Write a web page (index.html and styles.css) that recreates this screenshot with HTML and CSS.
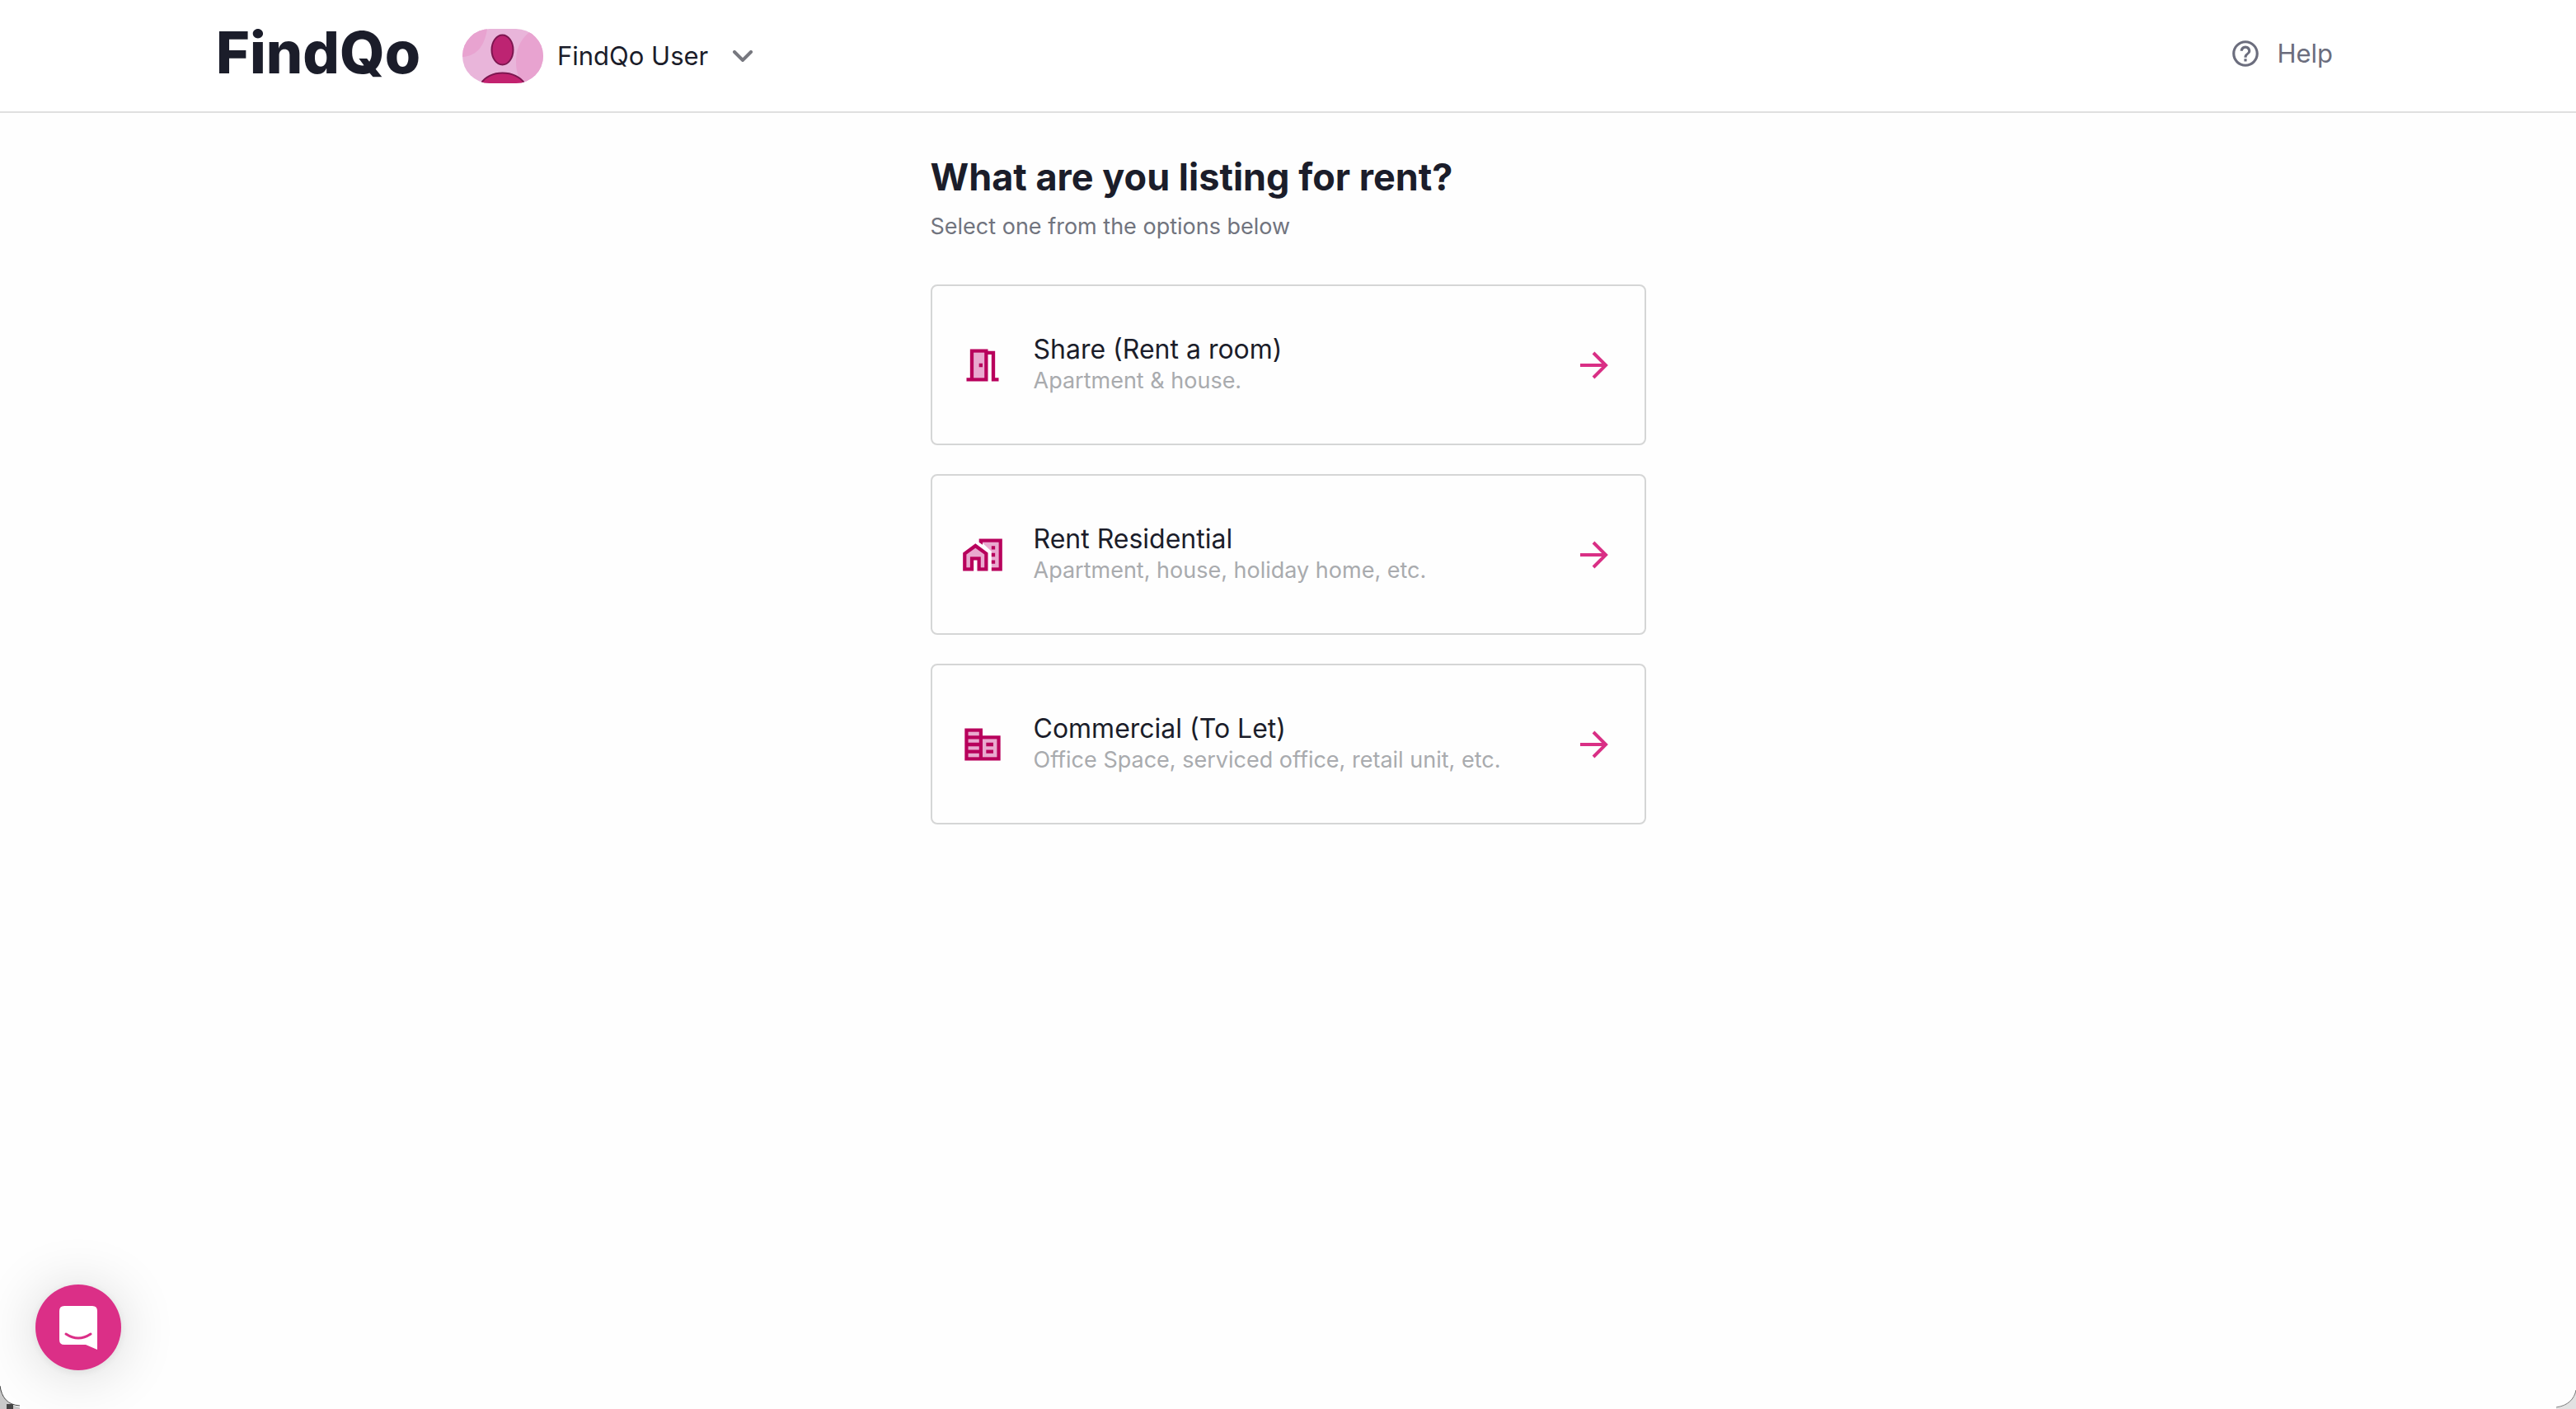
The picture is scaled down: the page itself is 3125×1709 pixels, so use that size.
FILE: index.html
```html
<!DOCTYPE html>
<html lang="en">
<head>
<meta charset="utf-8">
<meta name="viewport" content="width=device-width, initial-scale=1">
<title>FindQo – List for rent</title>
<link rel="stylesheet" href="styles.css">
</head>
<body>
<header class="topbar">
  <a class="logo" href="#">FindQo</a>
  <button class="account" type="button">
    <svg class="avatar" viewBox="0 0 98 66" aria-hidden="true">
      <rect width="98" height="66" fill="#e9b5da"/>
      <path d="M0 0H30C27 20 18 33 0 34Z" fill="#e8a3d0"/>
      <path d="M98 0H86C70 12 65 24 65 40C65 52 68 60 74 66H98Z" fill="#e8a3d0"/>
      <ellipse cx="48.500" cy="25.500" rx="13" ry="18" fill="#bd2472" stroke="#7d1650" stroke-width="2"/>
      <path d="M22 67C32 49 65 49 76 67Z" fill="#c2226f" stroke="#7d1650" stroke-width="2"/>
    </svg>
    <span>FindQo User</span>
    <svg class="chevron" viewBox="0 0 24 14" aria-hidden="true"><path d="M2 2L12 12L22 2"/></svg>
  </button>
  <a class="help" href="#">
    <svg class="help-icon" viewBox="0 0 24 24" aria-hidden="true"><path d="M11 18h2v-2h-2v2zm1-16C6.480 2 2 6.480 2 12s4.480 10 10 10 10-4.480 10-10S17.520 2 12 2zm0 18c-4.410 0-8-3.590-8-8s3.590-8 8-8 8 3.590 8 8-3.590 8-8 8zm0-14c-2.210 0-4 1.790-4 4h2c0-1.100.9-2 2-2s2 .9 2 2c0 2-3 1.750-3 5h2c0-2.250 3-2.500 3-5 0-2.210-1.790-4-4-4z"/></svg>
    <span>Help</span>
  </a>
</header>

<main class="content">
  <h1 class="title">What are you listing for rent?</h1>
  <p class="subtitle">Select one from the options below</p>
  <div class="options">
    <button class="option" type="button">
      <svg class="option-icon" viewBox="0 0 24 24" aria-hidden="true">
        <path class="tint" d="M7 5h6v14H7z"/>
        <path d="M19 19V4h-4V3H5v16H3v2h12V6h2v15h4v-2h-2zm-6 0H7V5h6v14zm-3-8h2v2h-2v-2z"/>
      </svg>
      <span class="option-text"><span class="option-name">Share (Rent a room)</span><span class="option-note">Apartment &amp; house.</span></span>
      <svg class="arrow" viewBox="0 0 34 34" aria-hidden="true"><path d="M0 17H31M16 2L31 17L16 32"/></svg>
    </button>
    <button class="option" type="button">
      <svg class="option-icon" viewBox="0 0 24 24" aria-hidden="true">
        <path class="tint" d="M8 8l-5 3.600V19h2v-6h6v6h2v-7.400zM11.500 5l5.500 5V19h4V5z"/>
        <path d="M1 10.800V21h6v-6h2v6h6V10.800L8 5.600zM13 19h-2v-6H5v6H3v-7.200L8 8.200l5 3.600zM17 7h2v2h-2zM17 11h2v2h-2zM17 15h2v2h-2z"/>
        <path d="M10 3v1.970l2 1.430V5h9v14h-4v2h6V3z"/>
      </svg>
      <span class="option-text"><span class="option-name">Rent Residential</span><span class="option-note">Apartment, house, holiday home, etc.</span></span>
      <svg class="arrow" viewBox="0 0 34 34" aria-hidden="true"><path d="M0 17H31M16 2L31 17L16 32"/></svg>
    </button>
    <button class="option" type="button">
      <svg class="option-icon" viewBox="0 0 24 24" aria-hidden="true">
        <path class="tint" d="M4 5h6v14H4zM12 9h8v10h-8z"/>
        <path d="M12 7V3H2v18h20V7H12zM12 19H10V17H4V15H10V13H4V11H10V9H4V7H10V5H4V3H2V21H22V19zM20 19h-8V9h8v10zm-2-8h-4v2h4v-2zm0 4h-4v2h4v-2z" fill-rule="evenodd" fill="none"/>
        <path d="M2 3H12V7H22V21H2zM4 5V7H10V5zM4 9V11H10V9zM4 13V15H10V13zM4 17V19H10V17zM12 9V19H20V9zM14 11H18V13H14zM14 15H18V17H14z" fill-rule="evenodd"/>
      </svg>
      <span class="option-text"><span class="option-name">Commercial (To Let)</span><span class="option-note">Office Space, serviced office, retail unit, etc.</span></span>
      <svg class="arrow" viewBox="0 0 34 34" aria-hidden="true"><path d="M0 17H31M16 2L31 17L16 32"/></svg>
    </button>
  </div>
</main>

<button class="chat" type="button" aria-label="Open chat">
  <svg class="chat-icon" viewBox="0 0 46 53" aria-hidden="true">
    <path d="M6 0H40Q46 0 46 6V53L32 47H6Q0 47 0 41V6Q0 0 6 0Z" fill="#fff"/>
    <path d="M8 34Q23 44 38 34" fill="none" stroke="#db2f87" stroke-width="3" stroke-linecap="round"/>
  </svg>
</button>
<svg class="corner corner-left" viewBox="0 0 24 30" aria-hidden="true">
  <path d="M0 0C1 16 9 25 24 28V30H0Z" fill="#c9c9c9"/>
  <path d="M8 24H16V30H8Z" fill="#444"/>
  <path d="M0 2C2 16 9 25 24 26" fill="none" stroke="#444" stroke-width="1"/>
</svg>
<svg class="corner corner-right" viewBox="0 0 24 30" aria-hidden="true">
  <path d="M24 7C22 18 14 26 0 29V30H24Z" fill="#e2e2e2"/>
  <path d="M24 7C22 18 14 26 0 28" fill="none" stroke="#777" stroke-width="1"/>
</svg>
</body>
</html>
```
FILE: styles.css
```css
*, *::before, *::after { box-sizing: border-box; }

body {
  margin: 0;
  min-height: 100vh;
  background: #fefefe;
  color: #1b1d2a;
  font-family: Inter, "Liberation Sans", sans-serif;
  font-size: 31px;
  line-height: 40px;
}

button {
  font: inherit;
  color: inherit;
  background: none;
  border: 0;
  padding: 0;
  cursor: pointer;
}

a { color: inherit; text-decoration: none; }
svg { display: block; flex: none; }

.topbar {
  display: flex;
  align-items: center;
  height: 137px;
  padding: 0 295px 0 262px;
  border-bottom: 2px solid #dfdfdf;
  background: #fff;
}

.logo {
  font-size: 70px;
  font-weight: 800;
  line-height: 80px;
  padding-bottom: 8px;
}

.account { display: flex; align-items: center; gap: 17px; margin-left: 51px; }
.avatar { width: 98px; height: 66px; border-radius: 33px; }
.chevron { width: 26px; height: 14px; margin-left: 12px; fill: none; stroke: #77787f; stroke-width: 4; stroke-linecap: round; }

.help { display: flex; align-items: center; gap: 19px; margin-left: auto; color: #6b6d7d; padding-bottom: 6px; }
.help-icon { width: 38px; height: 38px; fill: currentColor; }

.content { width: 100%; max-width: 868px; margin: 0 auto; padding: 48px 0; }

.title { margin: 0; font-size: 45px; font-weight: 700; line-height: 60px; }
.subtitle { margin: 10px 0 0; font-size: 27px; line-height: 40px; color: #71747e; }

.options { display: flex; flex-direction: column; gap: 35px; margin-top: 50px; }

.option {
  display: flex;
  align-items: center;
  min-height: 195px;
  padding: 0 44px 0 35px;
  border: 2px solid #d5d6d6;
  border-radius: 8px;
  text-align: left;
}

.option-icon { width: 52px; height: 52px; fill: #b8005c; }
.option-icon .tint { fill: #e9a9cf; }
.option-text { display: flex; flex: 1; flex-direction: column; margin-left: 36px; }
.option-name { font-size: 32px; line-height: 38px; }
.option-note { font-size: 27px; line-height: 38px; color: #a9abae; }
.arrow { width: 34px; height: 34px; fill: none; stroke: #d92f85; stroke-width: 4; }

.chat {
  position: fixed;
  left: 43px;
  bottom: 47px;
  display: flex;
  align-items: center;
  justify-content: center;
  width: 104px;
  height: 104px;
  border-radius: 50%;
  background: #db2f87;
  box-shadow: 0 4px 70px rgba(0, 0, 0, 0.16), 0 2px 12px rgba(0, 0, 0, 0.08);
}

.chat-icon { width: 46px; height: 53px; }

.corner { position: fixed; bottom: 0; width: 24px; height: 30px; }
.corner-left { left: 0; }
.corner-right { right: 0; }
```
